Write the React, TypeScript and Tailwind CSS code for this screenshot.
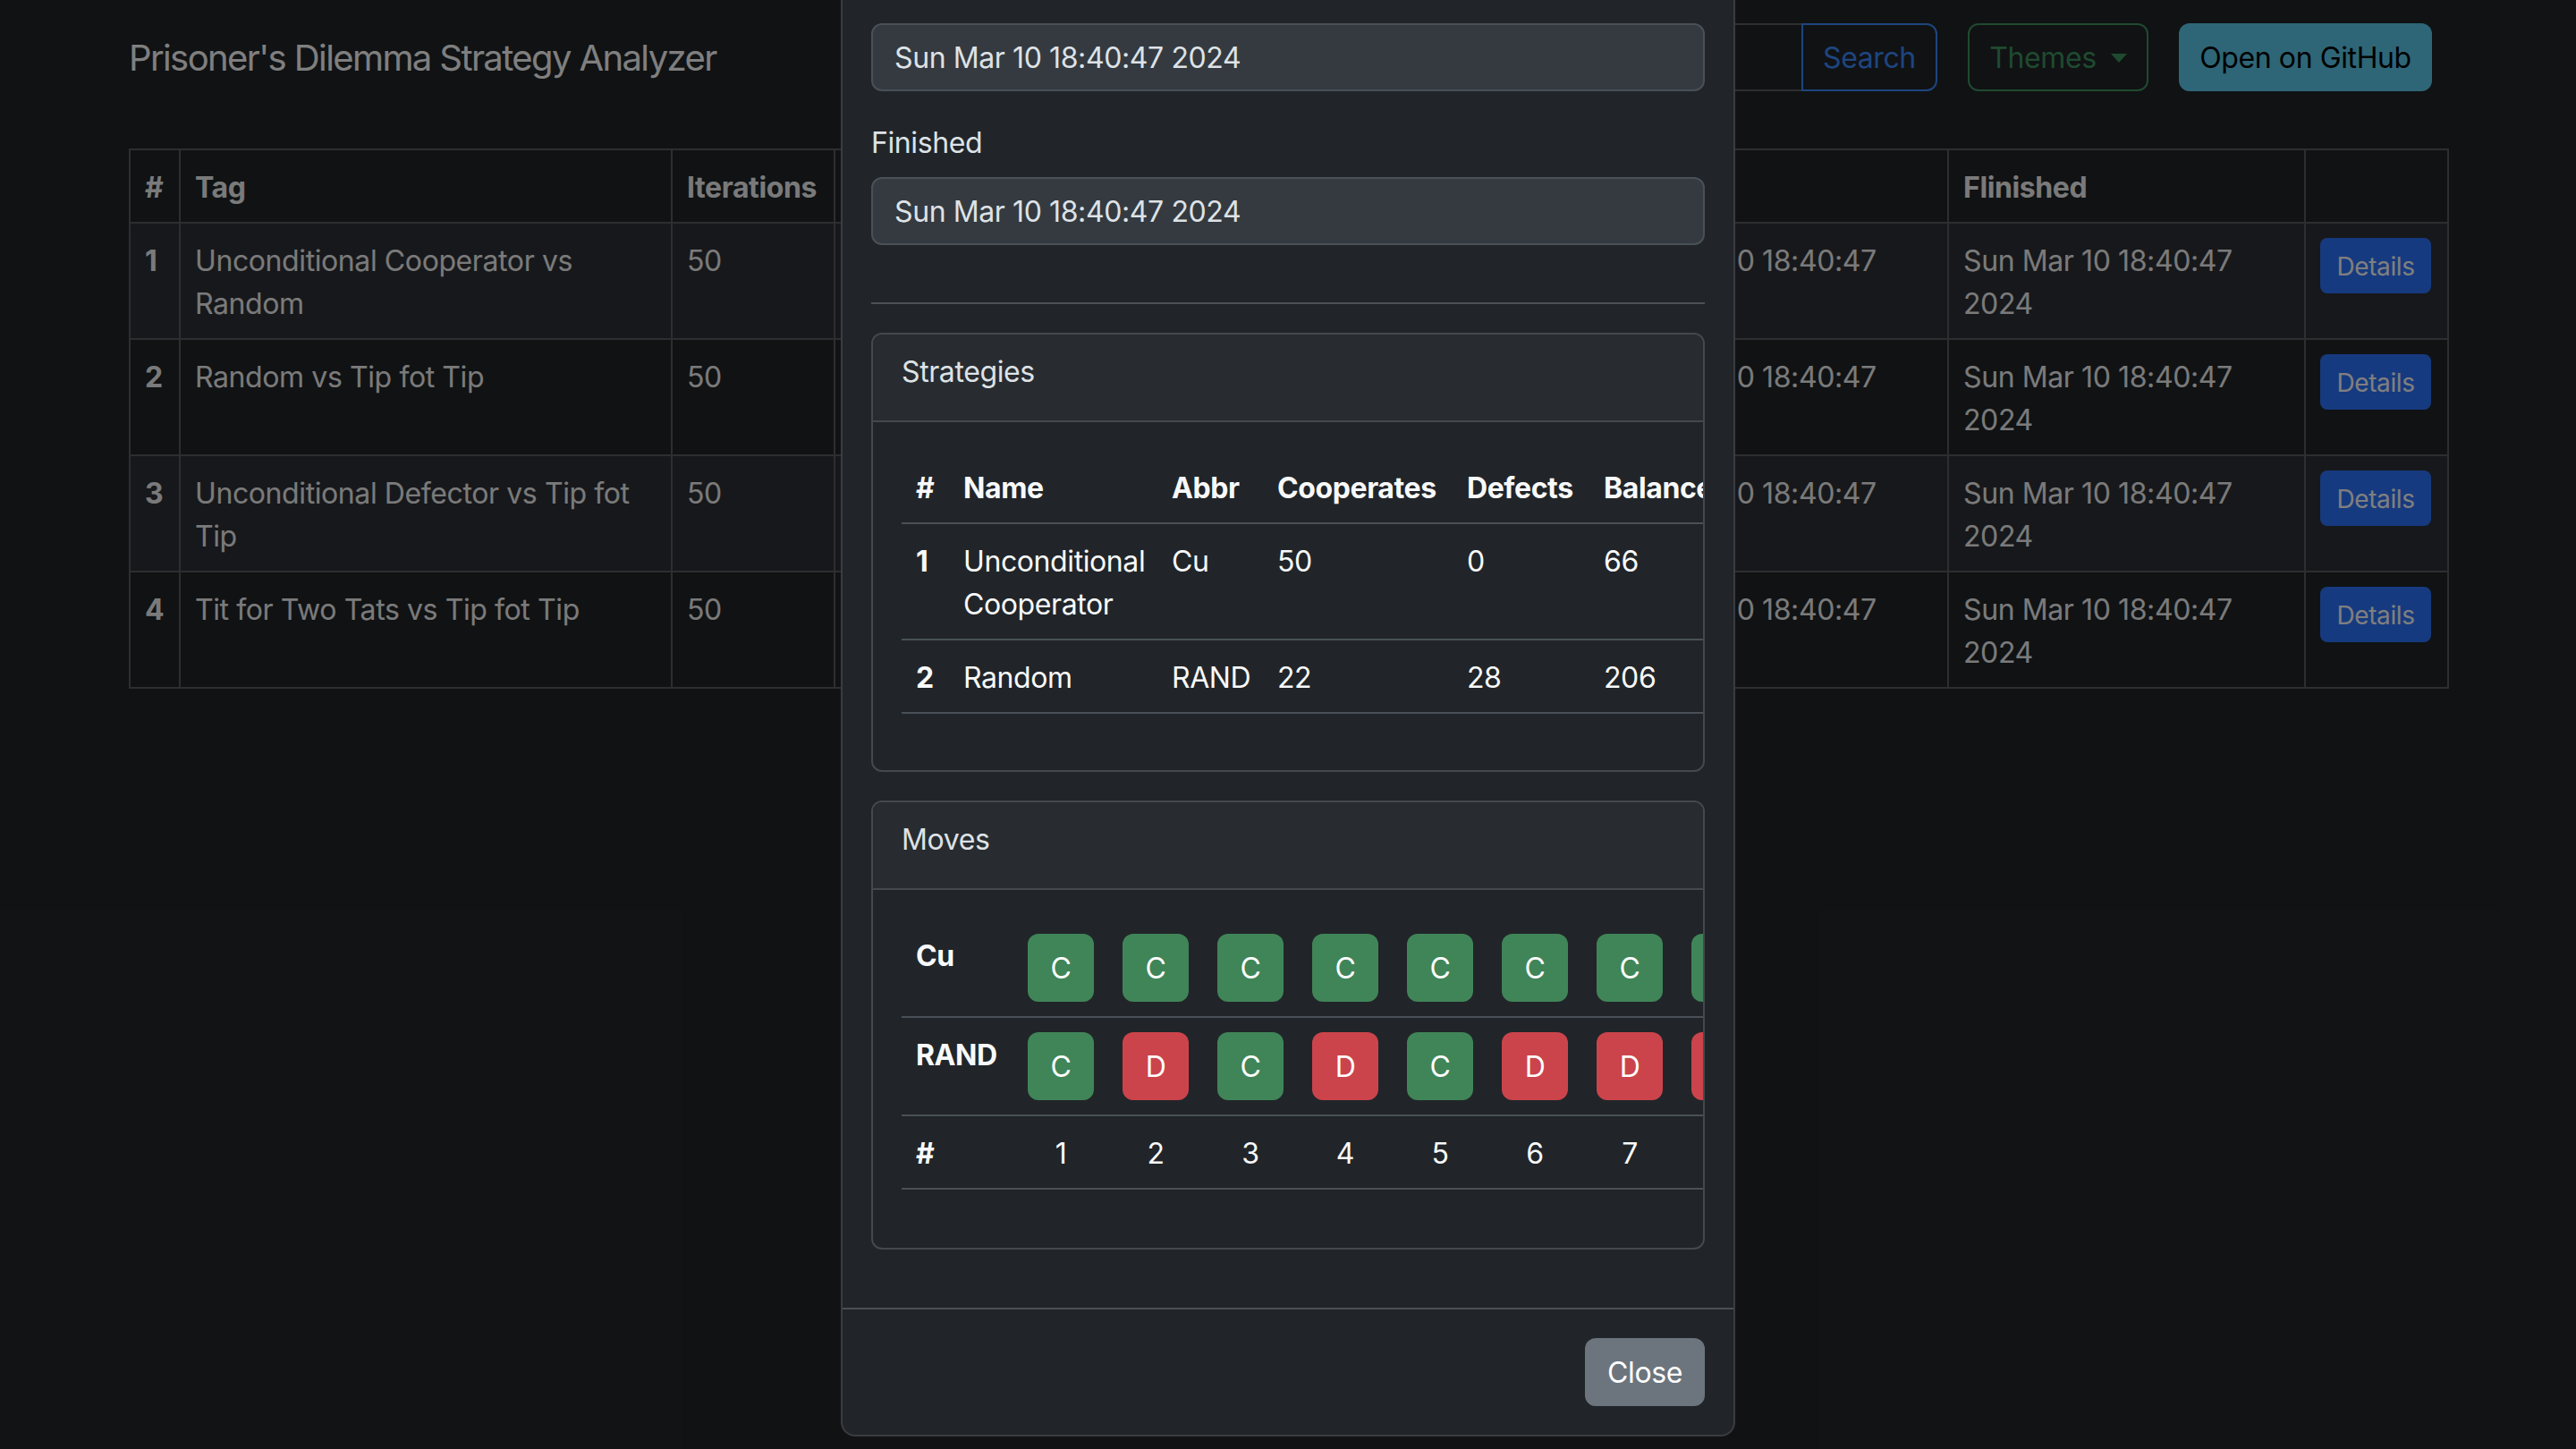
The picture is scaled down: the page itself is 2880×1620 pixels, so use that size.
import React from "react";

const DATE = "Sun Mar 10 18:40:47 2024";

const rows = [
  { n: 1, tag: "Unconditional Cooperator vs Random", it: 50 },
  { n: 2, tag: "Random vs Tip fot Tip", it: 50 },
  { n: 3, tag: "Unconditional Defector vs Tip fot Tip", it: 50 },
  { n: 4, tag: "Tit for Two Tats vs Tip fot Tip", it: 50 },
];

const cuMoves = ["C", "C", "C", "C", "C", "C", "C", "C", "C", "C"];
const randMoves = ["C", "D", "C", "D", "C", "D", "D", "D", "C", "C"];

function Move({ m }: { m: string }) {
  return (
    <div
      className={
        "mx-auto flex h-[76px] w-[74px] items-center justify-center rounded-[12px] pt-[2px] text-[32px] leading-[48px] text-white " +
        (m === "C" ? "bg-[#408558]" : "bg-[#cb444b]")
      }
    >
      {m}
    </div>
  );
}

export default function App() {
  return (
    <div className="relative h-[1620px] w-[2880px] overflow-hidden bg-[#212529] font-['Inter',sans-serif] tracking-[-0.025em]">
      {/* Page */}
      <div className="mx-auto w-[2640px] px-[24px]">
        <nav className="mt-[26px] flex h-[76px] items-center justify-between pr-[17px]">
          <span className="pt-[2px] text-[40px] leading-[60px] tracking-[-0.04em] text-white">
            Prisoner's Dilemma Strategy Analyzer
          </span>
          <div className="flex items-center gap-[34px]">
            <div className="flex">
              <div className="h-[76px] w-[300px] rounded-l-[12px] border-2 border-r-0 border-[#5a5d61] bg-[#212529]" />
              <button className="h-[76px] w-[152px] rounded-r-[12px] border-2 border-[#3d8bfd] pt-[2px] text-[32px] leading-[48px] text-[#3d8bfd]">
                Search
              </button>
            </div>
            <button className="flex h-[76px] w-[202px] items-center justify-center rounded-[12px] border-2 border-[#3e9460] pt-[2px] text-[32px] leading-[48px] text-[#3e9460]">
              Themes
              <span className="ml-[16px] h-0 w-0 border-x-[9px] border-t-[10px] border-x-transparent border-t-[#3e9460]" />
            </button>
            <button className="h-[76px] w-[283px] rounded-[12px] bg-[#5ccdee] pt-[2px] text-[32px] leading-[48px] text-black">
              Open on GitHub
            </button>
          </div>
        </nav>

        <table className="mt-[64px] w-full table-fixed border-collapse text-[32px] leading-[48px] text-[#f5f5f5]">
          <colgroup>
            <col className="w-[56px]" />
            <col className="w-[550px]" />
            <col className="w-[182px]" />
            <col className="w-[847px]" />
            <col className="w-[398px]" />
            <col className="w-[399px]" />
            <col className="w-[160px]" />
          </colgroup>
          <thead>
            <tr className="text-left font-bold">
              <th className="border-2 border-[#5a5d61] px-[16px] pt-[18px] pb-[14px] align-top">#</th>
              <th className="border-2 border-[#5a5d61] px-[16px] pt-[18px] pb-[14px] align-top">Tag</th>
              <th className="border-2 border-[#5a5d61] px-[16px] pt-[18px] pb-[14px] align-top">Iterations</th>
              <th className="border-2 border-[#5a5d61] px-[16px] pt-[18px] pb-[14px] align-top">Strategies</th>
              <th className="border-2 border-[#5a5d61] px-[16px] pt-[18px] pb-[14px] align-top">Started</th>
              <th className="border-2 border-[#5a5d61] px-[16px] pt-[18px] pb-[14px] align-top">Flinished</th>
              <th className="border-2 border-[#5a5d61] px-[16px] pt-[18px] pb-[14px] align-top"></th>
            </tr>
          </thead>
          <tbody>
            {rows.map((r) => (
              <tr key={r.n} className={r.n % 2 === 1 ? "bg-[#2e3136]" : ""}>
                <th className="border-2 border-[#5a5d61] px-[16px] pt-[18px] pb-[14px] text-left align-top font-bold">{r.n}</th>
                <td className="border-2 border-[#5a5d61] px-[16px] pt-[18px] pb-[14px] align-top">{r.tag}</td>
                <td className="border-2 border-[#5a5d61] px-[16px] pt-[18px] pb-[14px] align-top">{r.it}</td>
                <td className="border-2 border-[#5a5d61] px-[16px] pt-[18px] pb-[14px] align-top">Strategy pair</td>
                <td className="border-2 border-[#5a5d61] px-[16px] pt-[18px] pb-[14px] align-top">{DATE}</td>
                <td className="border-2 border-[#5a5d61] px-[16px] pt-[18px] pb-[14px] align-top">{DATE}</td>
                <td className="border-2 border-[#5a5d61] p-[16px] align-top">
                  <button className="h-[62px] w-[124px] rounded-[8px] bg-[#2c74fe] pt-[2px] text-[28px] leading-[42px] text-white">
                    Details
                  </button>
                </td>
              </tr>
            ))}
          </tbody>
        </table>
      </div>

      {/* Backdrop */}
      <div className="absolute inset-0 bg-black/50" />

      {/* Modal */}
      <div className="absolute left-[940px] top-0 w-[1000px] rounded-b-[16px] border-x-2 border-b-2 border-[#3a3c3f] bg-[#212529] text-[32px] leading-[48px] text-[#dee2e6]">
        <div className="px-[32px] pt-[26px] pb-[33px]">
          <div className="flex h-[76px] items-center rounded-[12px] border-2 border-[#495057] bg-[#343a40] px-[24px] pt-[2px]">
            {DATE}
          </div>
          <div className="mt-[32px] mb-[16px] h-[48px] pt-[2px]">Finished</div>
          <div className="flex h-[76px] items-center rounded-[12px] border-2 border-[#495057] bg-[#343a40] px-[24px] pt-[2px]">
            {DATE}
          </div>
          <div className="mt-[64px] mb-[32px] h-[2px] bg-[#4d5155]" />

          {/* Strategies card */}
          <div className="overflow-hidden rounded-[12px] border-2 border-[#45494d]">
            <div className="border-b-2 border-[#45494d] bg-[#282c30] px-[32px] pt-[18px] pb-[30px]">Strategies</div>
            <div className="pl-[32px] pt-[32px] pb-[32px]">
              <table className="mb-[31px] w-[929px] table-fixed border-collapse text-left text-[#f8f9fa]">
                <colgroup>
                  <col className="w-[53px]" />
                  <col className="w-[233px]" />
                  <col className="w-[118px]" />
                  <col className="w-[212px]" />
                  <col className="w-[153px]" />
                  <col className="w-[160px]" />
                </colgroup>
                <thead>
                  <tr className="font-bold">
                    <th className="border-b-2 border-[#495057] px-[16px] pt-[18px] pb-[14px] align-top">#</th>
                    <th className="border-b-2 border-[#495057] px-[16px] pt-[18px] pb-[14px] align-top">Name</th>
                    <th className="border-b-2 border-[#495057] px-[16px] pt-[18px] pb-[14px] align-top">Abbr</th>
                    <th className="border-b-2 border-[#495057] px-[16px] pt-[18px] pb-[14px] align-top">Cooperates</th>
                    <th className="border-b-2 border-[#495057] px-[16px] pt-[18px] pb-[14px] align-top">Defects</th>
                    <th className="whitespace-nowrap border-b-2 border-[#495057] px-[16px] pt-[18px] pb-[14px] align-top">Balance</th>
                  </tr>
                </thead>
                <tbody>
                  <tr>
                    <th className="border-b-2 border-[#495057] px-[16px] pt-[18px] pb-[14px] align-top font-bold">1</th>
                    <td className="border-b-2 border-[#495057] px-[16px] pt-[18px] pb-[14px] align-top">Unconditional Cooperator</td>
                    <td className="border-b-2 border-[#495057] px-[16px] pt-[18px] pb-[14px] align-top">Cu</td>
                    <td className="border-b-2 border-[#495057] px-[16px] pt-[18px] pb-[14px] align-top">50</td>
                    <td className="border-b-2 border-[#495057] px-[16px] pt-[18px] pb-[14px] align-top">0</td>
                    <td className="border-b-2 border-[#495057] px-[16px] pt-[18px] pb-[14px] align-top">66</td>
                  </tr>
                  <tr>
                    <th className="border-b-2 border-[#495057] px-[16px] pt-[18px] pb-[14px] align-top font-bold">2</th>
                    <td className="border-b-2 border-[#495057] px-[16px] pt-[18px] pb-[14px] align-top">Random</td>
                    <td className="border-b-2 border-[#495057] px-[16px] pt-[18px] pb-[14px] align-top">RAND</td>
                    <td className="border-b-2 border-[#495057] px-[16px] pt-[18px] pb-[14px] align-top">22</td>
                    <td className="border-b-2 border-[#495057] px-[16px] pt-[18px] pb-[14px] align-top">28</td>
                    <td className="border-b-2 border-[#495057] px-[16px] pt-[18px] pb-[14px] align-top">206</td>
                  </tr>
                </tbody>
              </table>
            </div>
          </div>

          {/* Moves card */}
          <div className="mt-[32px] mb-[32px] overflow-hidden rounded-[12px] border-2 border-[#45494d]">
            <div className="border-b-2 border-[#45494d] bg-[#282c30] px-[32px] pt-[18px] pb-[30px]">Moves</div>
            <div className="pl-[32px] pt-[32px] pb-[32px]">
              <table className="mb-[33px] w-[1185px] table-fixed border-collapse text-left text-[#f8f9fa]">
                <colgroup>
                  <col className="w-[125px]" />
                  {cuMoves.map((_, i) => (
                    <col key={i} className="w-[106px]" />
                  ))}
                </colgroup>
                <tbody>
                  <tr>
                    <th className="border-b-2 border-[#495057] px-[16px] pt-[18px] pb-[14px] align-top font-bold">Cu</th>
                    {cuMoves.map((m, i) => (
                      <td key={i} className="border-b-2 border-[#495057] px-[16px] pt-[17px] pb-[16px] align-top">
                        <Move m={m} />
                      </td>
                    ))}
                  </tr>
                  <tr>
                    <th className="border-b-2 border-[#495057] px-[16px] pt-[18px] pb-[14px] align-top font-bold">RAND</th>
                    {randMoves.map((m, i) => (
                      <td key={i} className="border-b-2 border-[#495057] px-[16px] pt-[16px] pb-[16px] align-top">
                        <Move m={m} />
                      </td>
                    ))}
                  </tr>
                  <tr>
                    <th className="border-b-2 border-[#495057] px-[16px] pt-[18px] pb-[14px] align-top font-bold">#</th>
                    {cuMoves.map((_, i) => (
                      <td key={i} className="border-b-2 border-[#495057] px-[16px] pt-[18px] pb-[14px] text-center align-top">
                        {i + 1}
                      </td>
                    ))}
                  </tr>
                </tbody>
              </table>
            </div>
          </div>
        </div>

        <div className="flex justify-end border-t-2 border-[#4b5057] p-[24px]">
          <button className="m-[8px] h-[76px] w-[134px] rounded-[12px] bg-[#6c757d] pt-[2px] text-[32px] leading-[48px] text-white">
            Close
          </button>
        </div>
      </div>
    </div>
  );
}
